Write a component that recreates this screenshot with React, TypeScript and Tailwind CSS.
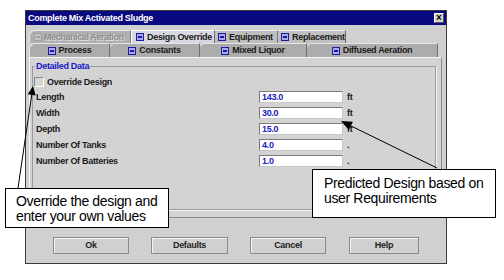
import React from "react";

const TabIcon = ({ disabled = false }: { disabled?: boolean }) => (
  <svg width="8" height="8" viewBox="0 0 8 8" className="shrink-0">
    <rect
      x="0.5"
      y="0.5"
      width="7"
      height="7"
      fill={disabled ? "#c2c2c2" : "#a9a9ee"}
      stroke={disabled ? "#a0a0a0" : "#1c1c9c"}
    />
    <rect x="2" y="3" width="4" height="2" fill={disabled ? "#a0a0a0" : "#1c1c9c"} />
  </svg>
);

const txt = "text-[9px] font-bold tracking-[-0.3px] leading-none whitespace-nowrap";

const rows: { label: string; value: string; unit: string }[] = [
  { label: "Length", value: "143.0", unit: "ft" },
  { label: "Width", value: "30.0", unit: "ft" },
  { label: "Depth", value: "15.0", unit: "ft" },
  { label: "Number Of Tanks", value: "4.0", unit: "." },
  { label: "Number Of Batteries", value: "1.0", unit: "." },
];

export default function App() {
  return (
    <div className="relative w-[504px] h-[280px] bg-white overflow-hidden font-['Liberation_Sans',Arial,sans-serif] text-[#1a1a1a]">
      {/* Window */}
      <div className="ml-[25px] mt-[10px] w-[422px] h-[254px] bg-[#d0d0d0] border border-[#3a3a3a] flex flex-col">
        {/* Title bar */}
        <div className="h-[14px] bg-[#0a0a80] flex items-center justify-between pl-[2px] pr-[2px]">
          <span className={`${txt} text-white`}>Complete Mix Activated Sludge</span>
          <div className="w-[10px] h-[10px] bg-[#d4d4d4] border border-t-white border-l-white border-r-[#555] border-b-[#555] flex items-center justify-center text-[10px] leading-none font-bold text-black">
            ×
          </div>
        </div>

        <div className="pl-[3px] pt-[5px] flex flex-col">
          {/* Tab row 1 */}
          <div className="flex h-[13px]">
            <div className="w-[102px] overflow-hidden flex items-center gap-[2px] pl-[4px] bg-[#b0b0b0] rounded-tl-[6px] border-t border-l border-t-[#e8e8e8] border-l-[#e8e8e8] border-r border-r-[#7a7a7a]">
              <TabIcon disabled />
              <span className={`${txt} tracking-[-0.4px] text-[#8e8e8e] [text-shadow:1px_1px_0_#e0e0e0]`}>Mechanical Aeration</span>
            </div>
            <div className="w-[84px] flex items-center gap-[3px] pl-[4px] bg-[#d8d8e0] border-t border-l border-t-white border-l-white border-r border-r-[#6a6a6a]">
              <TabIcon />
              <span className={txt}>Design Override</span>
            </div>
            <div className="w-[63px] flex items-center gap-[3px] pl-[3px] bg-[#bebebe] border-t border-t-[#ececec] border-r border-r-[#7a7a7a]">
              <TabIcon />
              <span className={txt}>Equipment</span>
            </div>
            <div className="w-[68px] flex items-center gap-[3px] pl-[3px] bg-[#c0c0c0] border-t border-t-[#ececec] border-r border-r-[#6a6a6a]">
              <TabIcon />
              <span className={txt}>Replacement</span>
            </div>
          </div>

          {/* Tab row 2 */}
          <div className="flex h-[14px]">
            {[
              { l: "Process", w: "w-[81px]" },
              { l: "Constants", w: "w-[90px]" },
              { l: "Mixed Liquor", w: "w-[107px]" },
              { l: "Diffused Aeration", w: "w-[131px]" },
            ].map((t, i) => (
              <div
                key={t.l}
                className={`${t.w} flex items-center justify-center gap-[3px] bg-[#acacac] border-t border-t-[#e6e6e6] border-r border-r-[#707070] ${
                  i === 0 ? "rounded-tl-[6px] border-l border-l-[#e6e6e6]" : "rounded-tl-[5px]"
                }`}
              >
                <TabIcon />
                <span className={txt}>{t.l}</span>
              </div>
            ))}
          </div>

          {/* Panel */}
          <div className="w-[413px] h-[161px] bg-[#d3d3d3] border border-t-[#f6f6f6] border-l-[#f6f6f6] border-r-[#8a8a8a] border-b-[#8a8a8a] pl-[2px] pt-[8px]">
            <div className="relative w-[404px] h-[144px] border border-[#9a9a9a] shadow-[1px_1px_0_#f4f4f4] pl-[1px] pt-[8px] flex flex-col">
              <span className={`absolute -top-[5px] left-[2px] px-[1px] bg-[#d3d3d3] ${txt} text-[#1818c8]`}>
                Detailed Data
              </span>
              <div className="h-[14px] flex items-center">
                <div className="w-[10px] h-[10px] bg-[#d6d6d6] border border-t-[#8a8a8a] border-l-[#8a8a8a] border-r-white border-b-white" />
                <span className={`${txt} ml-[3px]`}>Override Design</span>
              </div>
              {rows.map((r) => (
                <div key={r.label} className="h-[16px] flex items-center pl-[2px]">
                  <span className={`${txt} w-[223px]`}>{r.label}</span>
                  <div className="w-[84px] h-[12px] bg-white border border-t-[#7a7a7a] border-l-[#7a7a7a] border-r-[#c8c8c8] border-b-[#c8c8c8] flex items-center pl-[2px]">
                    <span className={`${txt} text-[#1c1cc0]`}>{r.value}</span>
                  </div>
                  <span className={`${txt} ml-[4px]`}>{r.unit}</span>
                </div>
              ))}
            </div>
          </div>

          {/* Buttons */}
          <div className="flex mt-[19px] pl-[24px]">
            {[
              { l: "Ok", w: "w-[76px]", m: "" },
              { l: "Defaults", w: "w-[77px]", m: "ml-[22px]" },
              { l: "Cancel", w: "w-[76px]", m: "ml-[22px]" },
              { l: "Help", w: "w-[70px]", m: "ml-[23px]" },
            ].map((b) => (
              <div
                key={b.l}
                className={`${b.w} ${b.m} h-[17px] bg-[#d0d0d0] border border-[#8a8a8a] shadow-[inset_1px_1px_0_#f4f4f4] flex items-center justify-center`}
              >
                <span className={`${txt} text-[#222]`}>{b.l}</span>
              </div>
            ))}
          </div>
        </div>
      </div>

      {/* Arrows */}
      <svg className="absolute left-0 top-0 pointer-events-none" width="504" height="280" viewBox="0 0 504 280">
        <line x1="18" y1="188" x2="32" y2="93" stroke="#000" strokeWidth="1" />
        <polygon points="33,86 35.7,95.5 27.7,94.3" fill="#000" />
        <line x1="437" y1="168" x2="349" y2="125" stroke="#000" strokeWidth="1" />
        <polygon points="341,121 352.9,121.8 348.9,129.9" fill="#000" />
      </svg>

      {/* Callouts */}
      <div className="absolute left-[5px] top-[188px] w-[164px] h-[40px] bg-white border border-black pl-[10px] pt-[5px] text-[14px] leading-[15px] tracking-[-0.35px] text-black">
        <div>Override the design and</div>
        <div>enter your own values</div>
      </div>
      <div className="absolute left-[312px] top-[169px] w-[184px] h-[49px] bg-white border border-black pl-[11px] pt-[6px] text-[14px] leading-[15px] tracking-[-0.35px] text-black">
        <div>Predicted Design based on</div>
        <div>user Requirements</div>
      </div>
    </div>
  );
}
